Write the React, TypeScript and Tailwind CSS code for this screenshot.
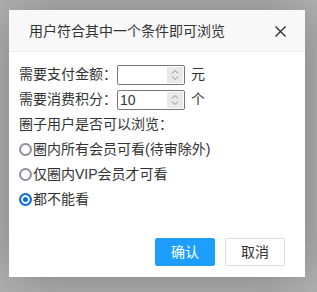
import React from "react";

const font = '"Liberation Sans", "Noto Sans CJK SC", sans-serif';

function NumberField({ value }: { value?: string }) {
  return (
    <div className="flex h-[20px] w-[68px] items-stretch rounded-[2px] border border-[#767676] bg-white p-[1px]">
      <input
        type="text"
        defaultValue={value}
        className="min-w-0 flex-1 px-[1px] text-[14px] leading-[16px] text-[#333] outline-none"
      />
      <div className="flex w-[16px] flex-col items-center justify-center bg-[#e9e9ed]">
        <svg width="8" height="12" viewBox="0 0 8 12">
          <path d="M1 4.5 L4 1.5 L7 4.5 M1 7.5 L4 10.5 L7 7.5" fill="none" stroke="#8d8d8d" strokeWidth="1" />
        </svg>
      </div>
    </div>
  );
}

function Radio({ label, checked }: { label: string; checked?: boolean }) {
  return (
    <label className="flex h-[25px] items-center">
      <input
        type="radio"
        name="browse"
        defaultChecked={checked}
        className="m-0 h-[13px] w-[13px] appearance-none rounded-full border-2 border-[#8f8f9d] bg-white checked:border-[#0b6edb] checked:bg-[#0b6edb] checked:shadow-[inset_0_0_0_2px_white]"
      />
      <span className="ml-[1px]">{label}</span>
    </label>
  );
}

export default function App() {
  return (
    <div className="h-[292px] w-[317px] bg-[#b3b3b3] pl-[9px] pt-[10px]" style={{ fontFamily: font }}>
      <div className="flex w-[296px] flex-col bg-white text-[14px] text-[#333] shadow-[1px_1px_50px_rgba(0,0,0,0.3)]">
        <div className="flex h-[42px] items-center justify-between border-b border-[#eee] bg-[#f8f8f8] pl-[20px] pr-[19px]">
          <span className="mt-[1px]">用户符合其中一个条件即可浏览</span>
          <svg width="11" height="11" viewBox="0 0 11 11" className="mt-[1px]">
            <path d="M0.5 0.5 L10.5 10.5 M10.5 0.5 L0.5 10.5" stroke="#2e2e2e" strokeWidth="1.4" />
          </svg>
        </div>

        <div className="px-[10px] pb-[21px] pt-[10px]">
          <div className="flex h-[25px] items-center">
            <span>需要支付金额：</span>
            <NumberField />
            <span className="ml-[6px]">元</span>
          </div>
          <div className="flex h-[25px] items-center">
            <span>需要消费积分：</span>
            <NumberField value="10" />
            <span className="ml-[6px]">个</span>
          </div>
          <div className="flex h-[25px] items-center">圈子用户是否可以浏览：</div>
          <Radio label="圈内所有会员可看(待审除外)" />
          <Radio label="仅圈内VIP会员才可看" />
          <Radio label="都不能看" checked />
        </div>

        <div className="flex justify-end gap-[10px] px-[20px] pb-[11px] pt-[5px]">
          <button className="h-[28px] rounded-[2px] border border-[#1e9fff] bg-[#1e9fff] px-[15px] leading-[26px] text-white">
            确认
          </button>
          <button className="h-[28px] rounded-[2px] border border-[#dedede] bg-white px-[15px] leading-[26px] text-[#333]">
            取消
          </button>
        </div>
      </div>
    </div>
  );
}
